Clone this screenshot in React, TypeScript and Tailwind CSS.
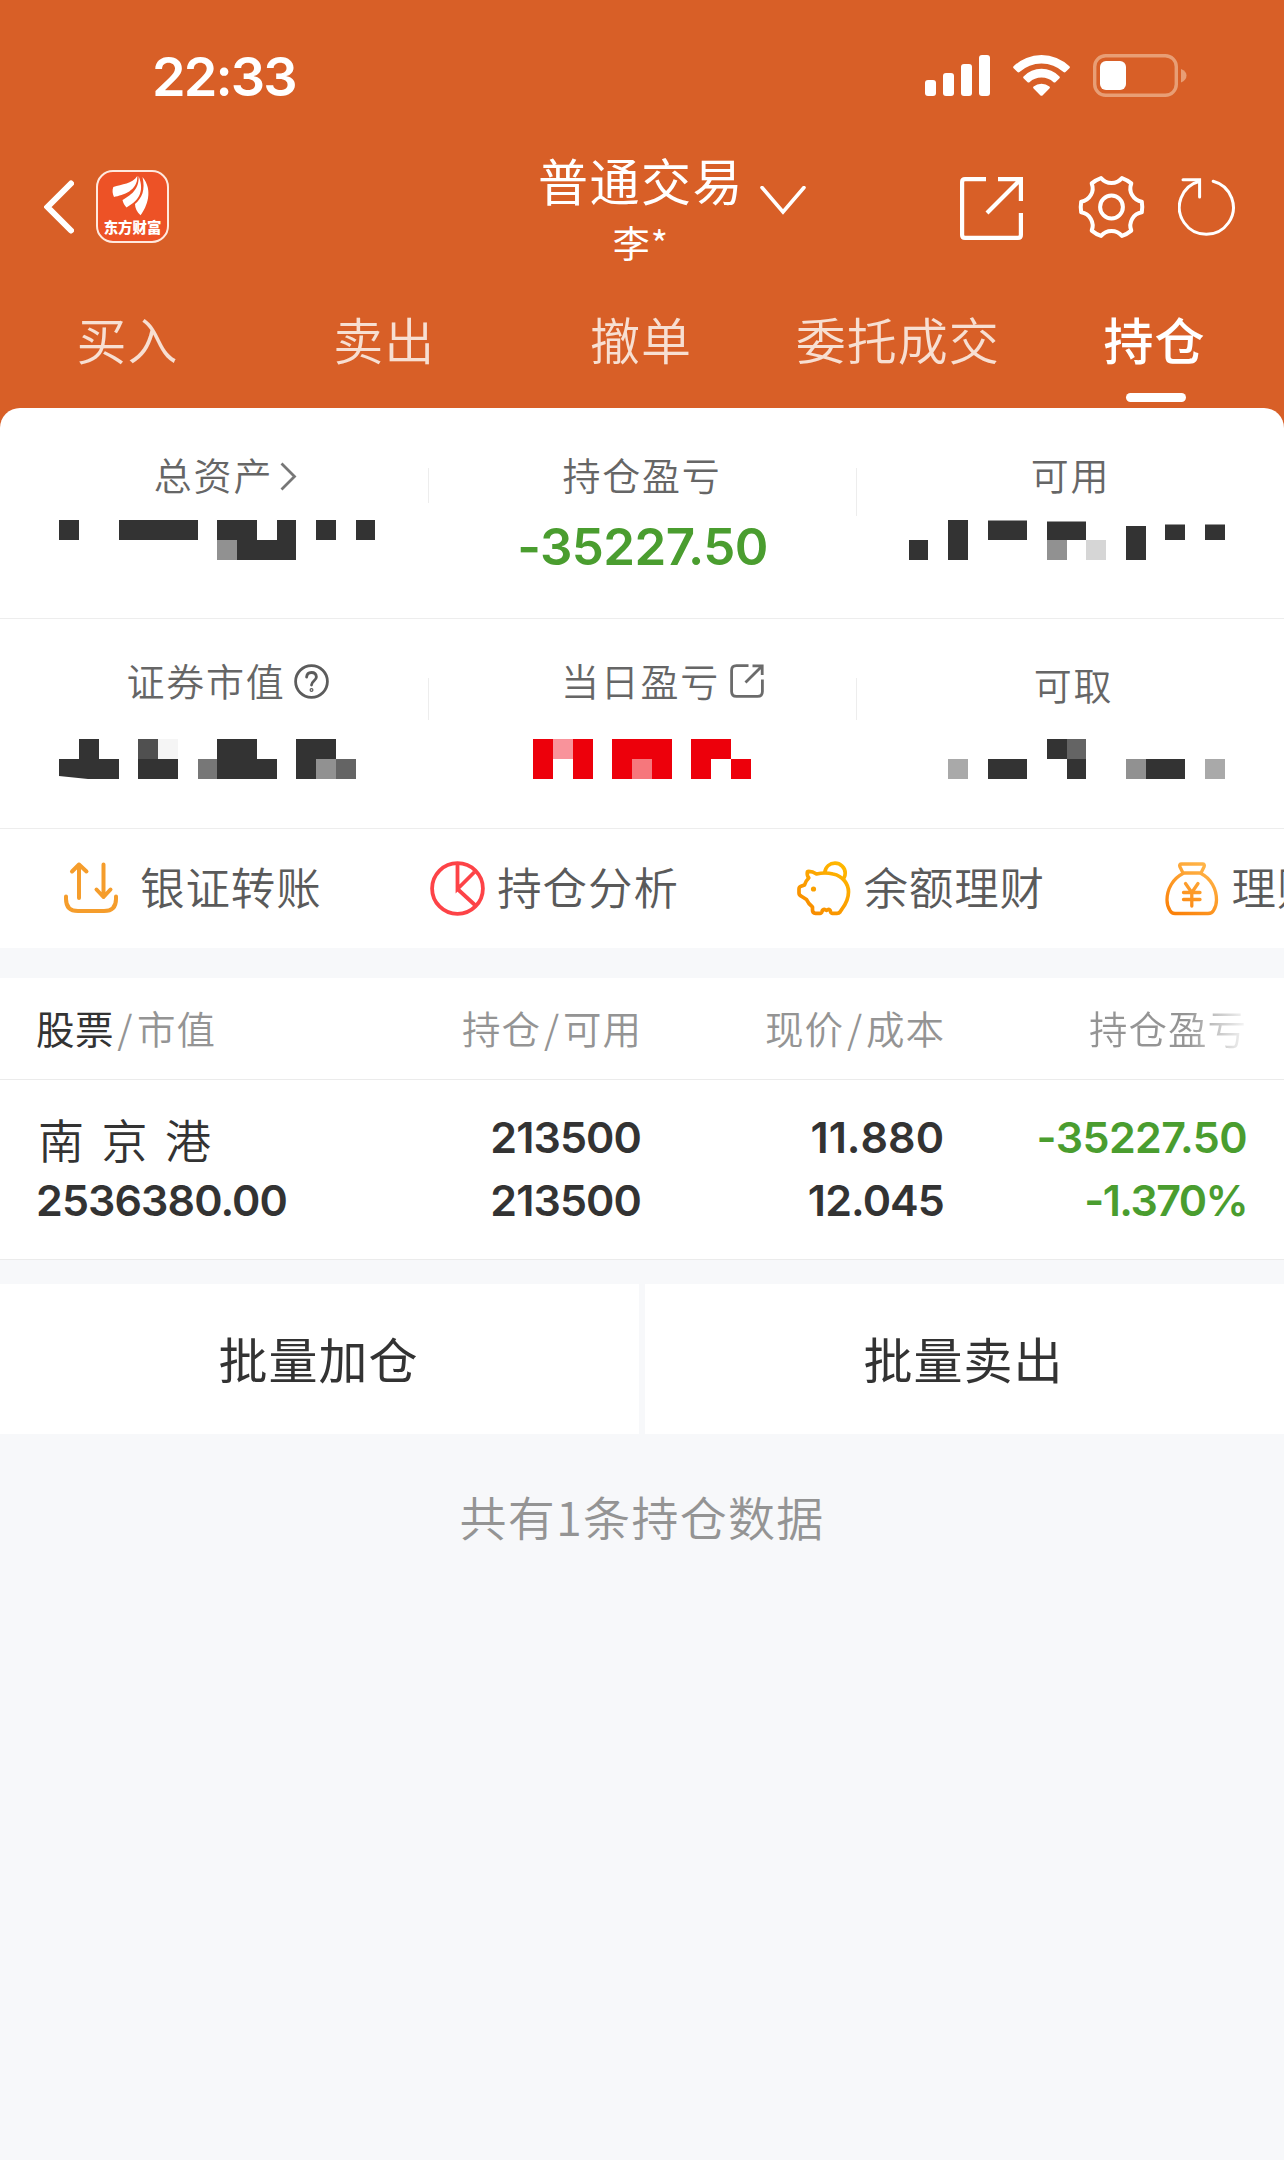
import { ReactNode } from "react";

const tabs = ["买入", "卖出", "撤单", "委托成交", "持仓"];

const DARK = "#333333";
const RED = "#ed000b";
const UNIT = 19.75;

// [first cell, number of cells, row, color, top inset]
type Block = [number, number, number, string, number?];

const totalAssets: Block[] = [
  [3, 1, 0, DARK],
  [6, 4, 0, DARK],
  [11, 2, 0, DARK],
  [14, 1, 0, DARK],
  [16, 1, 0, DARK],
  [18, 1, 0, DARK],
  [11, 1, 1, "#919191"],
  [12, 3, 1, DARK],
];

const available: Block[] = [
  [48, 1, 0, DARK],
  [50, 2, 0, DARK, 0.5],
  [53, 2, 0, DARK, 1.5],
  [57, 1, 0, DARK, 6],
  [59, 1, 0, DARK, 4.5],
  [61, 1, 0, DARK, 4.5],
  [46, 1, 1, DARK],
  [48, 1, 1, DARK],
  [53, 1, 1, "#919191"],
  [55, 1, 1, "#d6d6d6"],
  [57, 1, 1, DARK],
];

const marketValue: Block[] = [
  [4, 1, 0, DARK],
  [7, 1, 0, "#505050"],
  [8, 1, 0, "#f5f5f5"],
  [11, 2, 0, DARK],
  [15, 2, 0, DARK],
  [3, 3, 1, DARK],
  [7, 2, 1, DARK],
  [10, 1, 1, "#777777"],
  [11, 3, 1, DARK],
  [15, 1, 1, DARK],
  [16, 1, 1, "#919191"],
  [17, 1, 1, "#646464"],
];

const dayProfit: Block[] = [
  [27, 1, 0, RED],
  [28, 1, 0, "#f9939b"],
  [29, 1, 0, RED],
  [31, 3, 0, RED],
  [35, 2, 0, RED],
  [27, 1, 1, RED],
  [29, 1, 1, RED],
  [31, 1, 1, RED],
  [32, 1, 1, "#f6777c"],
  [33, 1, 1, RED],
  [35, 1, 1, RED],
  [37, 1, 1, RED],
];

const withdrawable: Block[] = [
  [53, 1, 0, DARK],
  [54, 1, 0, "#646464"],
  [48, 1, 1, "#a9a9a9"],
  [50, 2, 1, DARK],
  [54, 1, 1, DARK],
  [57, 1, 1, "#919191"],
  [58, 2, 1, DARK],
  [61, 1, 1, "#a9a9a9"],
];

// hidden amount, drawn as a mosaic on the page wide cell grid
const Mosaic = ({ column, blocks, notch }: { column: number; blocks: Block[]; notch?: boolean }) => (
  <svg width="428" height="40" viewBox={`${column * 428} 0 428 40`} className="block">
    {blocks.map(([cell, count, row, color, inset = 0]) => {
      const x = Math.round(cell * UNIT);
      return (
        <rect
          key={`${cell}-${row}`}
          x={x}
          y={row * 20 + inset}
          width={Math.round((cell + count) * UNIT) - x}
          height={20 - inset}
          fill={color}
        />
      );
    })}
    {notch && <path d="M59 37L88 40H59Z" fill="#fff" />}
  </svg>
);

const StatusBar = () => (
  <div className="flex h-[152px] items-center pl-[152px]">
    <span className="w-[773px] pt-[2px] font-[Inter,sans-serif] text-[54px] leading-none font-[580] tracking-[-1.9px]">
      22:33
    </span>
    <svg width="65" height="41" viewBox="0 0 65 41" fill="#fff" className="mb-px">
      <rect x="0" y="25" width="11" height="16" rx="3" />
      <rect x="18" y="18" width="11" height="23" rx="3" />
      <rect x="36" y="9" width="11" height="32" rx="3" />
      <rect x="54" y="0" width="11" height="41" rx="3" />
    </svg>
    <svg width="57" height="42" viewBox="0 0 57 42" fill="#fff" className="mb-[2px] ml-[23px]">
      <path d="M.6 12.3A40 40 0 0 1 56.4 12.3Q57.4 13.3 56.4 14.3L52.5 18Q51.5 18.8 50.5 18A33 33 0 0 0 6.5 18Q5.5 18.8 4.5 18L.6 14.3Q-.4 13.3.6 12.3Z" />
      <path d="M10.5 22.4A25 25 0 0 1 46.5 22.4Q47.3 23.3 46.5 24.2L42.4 28.2Q41.5 29 40.5 28.2A18 18 0 0 0 16.5 28.2Q15.5 29 14.6 28.2L10.5 24.2Q9.7 23.3 10.5 22.4Z" />
      <path d="M20.6 32.5A12.5 12.5 0 0 1 36.4 32.5Q37.4 33.5 36.4 34.5L29.5 41.4Q28.5 42.3 27.5 41.4L20.6 34.5Q19.6 33.5 20.6 32.5Z" />
    </svg>
    <svg width="95" height="43" viewBox="0 0 95 43" className="mb-[1px] ml-[23px]">
      <rect x="1.7" y="1.7" width="81.6" height="39.6" rx="11" fill="none" stroke="#e89e75" strokeWidth="3.4" />
      <rect x="7" y="7" width="26" height="29" rx="6" fill="#fff" />
      <path d="M88 15Q93.5 17 93.5 21.5T88 28.5Z" fill="#e89e75" />
    </svg>
  </div>
);

const Logo = () => (
  <div className="ml-[22px] flex h-[73px] w-[73px] flex-col items-center rounded-[17px] border-2 border-[#ffe9de] bg-[#ed5226]">
    <svg width="69" height="46" viewBox="2 2 69 46" fill="#fff" className="shrink-0">
      <path d="M41.3 6C36 14 26 14 17.3 17C16 20 16.5 24 18 27C27 25 42 21 41.3 6Z" />
      <path d="M42.6 6C43.5 20 34 25.5 26.5 30C27 33 28.5 35 30.5 37.5C41 31.5 49.5 23 42.6 6Z" />
      <path d="M46.5 7C49.5 20 46 28 39 34C39 38 41 42 44.5 45.3C51 37 57.5 20 46.5 7Z" />
    </svg>
    <span className="text-[14.4px] leading-[18px] font-black whitespace-nowrap">东方财富</span>
  </div>
);

const NavBar = () => (
  <div className="flex h-[108px] items-center pl-[44px]">
    <svg width="30" height="54" viewBox="0 0 30 54" fill="none" stroke="#fff" strokeWidth="6" strokeLinecap="round" className="mt-px">
      <path d="M27 3.5L3.5 27L27 50.5" />
    </svg>
    <Logo />
    <div className="-my-3 ml-[372px] flex w-[200px] flex-col items-center pt-[2px]">
      <span className="text-[50px] leading-[70px] tracking-[1.5px] whitespace-nowrap">普通交易</span>
      <span className="text-[37px] leading-[56px] tracking-[1px]">李*</span>
    </div>
    <svg width="46" height="29" viewBox="0 0 46 29" fill="none" stroke="#fff" strokeWidth="3.6" className="mt-[-11px] ml-[19px]">
      <path d="M2 1.5L23 26L44 1.5" strokeLinecap="round" />
    </svg>
    <svg width="63" height="63" viewBox="0 0 63 63" fill="none" stroke="#fff" strokeWidth="4.2" className="mt-[5px] ml-[154px]">
      <path d="M26 2.1H5Q2.1 2.1 2.1 5V58Q2.1 60.9 5 60.9H58Q60.9 60.9 60.9 58V36" />
      <path d="M38 2.1H60.9V24M60.5 2.5L27 36" />
    </svg>
    <svg width="67" height="64" viewBox="0 0 67 64" fill="none" stroke="#fff" strokeWidth="4" strokeLinejoin="round" className="mt-[2px] ml-[55px]">
      <path d="M23 3.1A13.5 13.5 0 0 0 44 3.1A31 31 0 0 1 53.3 8.4A13.5 13.5 0 0 0 63.8 26.7A31 31 0 0 1 63.8 37.3A13.5 13.5 0 0 0 53.3 55.6A31 31 0 0 1 44 60.9A13.5 13.5 0 0 0 23 60.9A31 31 0 0 1 13.7 55.6A13.5 13.5 0 0 0 3.2 37.3A31 31 0 0 1 3.2 26.7A13.5 13.5 0 0 0 13.7 8.4A31 31 0 0 1 23 3.1Z" />
      <circle cx="33.5" cy="32" r="11.4" />
    </svg>
    <svg width="58" height="58" viewBox="0 0 58 58" fill="none" stroke="#fff" strokeWidth="3" strokeLinecap="round" className="mt-[2px] ml-[33px]">
      <path d="M35.2 3.2A27 27 0 1 1 21.5 3.2" />
      <path d="M5 1.8H21.6V19" />
    </svg>
  </div>
);

const TabBar = () => (
  <div className="grid h-[148px] grid-cols-5 pt-[48px]">
    {tabs.map((tab) => {
      const active = tab === "持仓";
      return (
        <div key={tab} className="flex flex-col items-center">
          <span
            className={`pr-[2px] text-[50px] leading-[60px] tracking-[1px] whitespace-nowrap ${
              active ? "font-medium text-white" : "font-[350] text-[#f7dfd2]"
            }`}
          >
            {tab}
          </span>
          {active && <div className="mt-[25px] h-[9px] w-[60px] rounded-full bg-white" />}
        </div>
      );
    })}
  </div>
);

const Label = ({ children, className = "" }: { children: ReactNode; className?: string }) => (
  <div
    className={`flex h-[50px] items-center justify-center text-[38px] leading-[50px] font-[350] tracking-[1.8px] text-[#666] ${className}`}
  >
    {children}
  </div>
);

const Stats = () => (
  <div className="rounded-t-[20px] bg-white text-[#333]">
    <div className="flex h-[211px] border-b border-[#ededed] pt-[41px]">
      <div className="w-[428px]">
        <Label className="pl-[23px]">
          总资产
          <svg width="17" height="29" viewBox="0 0 17 29" fill="none" stroke="#777" strokeWidth="2.8" className="mt-[4px] ml-[7px]">
            <path d="M1.5 1.5L14.5 14.5L1.5 27.5" />
          </svg>
        </Label>
        <div className="mt-[21px]">
          <Mosaic column={0} blocks={totalAssets} />
        </div>
      </div>
      <div className="mt-[19px] h-[35px] w-px bg-[#ededed]" />
      <div className="w-[427px]">
        <Label className="pr-px">持仓盈亏</Label>
        <div className="mt-[18px] text-center font-[Inter,sans-serif] text-[51px] leading-[60px] font-[580] tracking-[-0.6px] text-[#4a9d2f]">
          -35227.50
        </div>
      </div>
      <div className="mt-[19px] h-[48px] w-px bg-[#ededed]" />
      <div className="w-[427px]">
        <Label>可用</Label>
        <div className="mt-[21px] -ml-px">
          <Mosaic column={2} blocks={available} />
        </div>
      </div>
    </div>
    <div className="flex h-[210px] border-b border-[#ededed] pt-[36px]">
      <div className="w-[428px]">
        <Label className="pl-[27px]">
          证券市值
          <svg width="35" height="35" viewBox="0 0 35 35" fill="none" stroke="#5c5c5c" strokeWidth="2.8" strokeLinecap="round" className="mt-[2px] ml-[8px]">
            <circle cx="17.5" cy="17.5" r="15.9" />
            <path d="M12.6 13.2Q12.9 8.5 17.5 8.5T22.4 13C22.4 16.5 17.5 17 17.5 21" />
            <circle cx="17.5" cy="26" r="0.6" />
          </svg>
        </Label>
        <div className="mt-[34px]">
          <Mosaic column={0} blocks={marketValue} notch />
        </div>
      </div>
      <div className="mt-[23px] h-[42px] w-px bg-[#ededed]" />
      <div className="w-[427px]">
        <Label className="pl-[40px]">
          当日盈亏
          <svg width="34" height="34" viewBox="0 0 34 34" fill="none" stroke="#6b6b6b" strokeWidth="2.8" className="mt-[2px] ml-[10px]">
            <path d="M18.5 1.6H6.5Q1.6 1.6 1.6 6.5V27.5Q1.6 32.4 6.5 32.4H27.5Q32.4 32.4 32.4 27.5V15.5" />
            <path d="M22.5 1.9H32.2V11M31.8 2.2L15.5 18.5" />
          </svg>
        </Label>
        <div className="mt-[34px] -ml-px">
          <Mosaic column={1} blocks={dayProfit} />
        </div>
      </div>
      <div className="mt-[23px] h-[42px] w-px bg-[#ededed]" />
      <div className="w-[427px]">
        <Label className="mt-[4px] pl-[6px]">可取</Label>
        <div className="mt-[30px] -ml-px">
          <Mosaic column={2} blocks={withdrawable} />
        </div>
      </div>
    </div>
  </div>
);

const TransferIcon = () => (
  <svg width="56" height="55" viewBox="0 0 56 55" fill="none" stroke="#f59d2c" strokeWidth="4" strokeLinecap="round" strokeLinejoin="round">
    <path d="M3 35.5V38Q3 50 15 50H41Q53 50 53 38V35.5" />
    <path d="M16 37V3.5M9 10.5L16 3.5L23.5 10.5" />
    <path d="M40.5 3.5V36M33.5 28.5L40.5 36L47.5 28.5" />
  </svg>
);

const PieIcon = () => (
  <svg width="55" height="55" viewBox="0 0 55 55" fill="none" stroke="#fd4347" strokeWidth="3.8">
    <circle cx="27.5" cy="27.5" r="25.4" />
    <path d="M27.5 2V28L44.5 11M27.5 28L46 45" />
  </svg>
);

const PiggyIcon = () => (
  <svg width="54" height="55" viewBox="0 0 54 55" fill="none" stroke="url(#piggy)" strokeWidth="3.7" strokeLinejoin="round" strokeLinecap="round">
    <defs>
      <linearGradient id="piggy" gradientUnits="userSpaceOnUse" x1="44" y1="2" x2="10" y2="50">
        <stop offset="0" stopColor="#ffb800" />
        <stop offset="1" stopColor="#f88c00" />
      </linearGradient>
    </defs>
    <path d="M10.5 10.5Q15 10 19.5 13Q28 11 36 13C46 15 51.5 23 51.5 31C51.5 38 48 44 45 48L43 51Q42 52.3 40 52.3H35.5Q34 52.3 33.5 50.5Q33 48.3 31.5 48.3L29.5 49.3L27.5 48.3Q25.5 48.3 25 50.5Q24.5 52.3 23 52.3H18.5Q15.5 52.3 15.5 49V46Q11.5 43 9.5 38.5L4 35Q2 34 2 32V28Q2 26 4 25.3L7.5 24Q8.5 20 11.8 17Q9.5 14 10.5 10.5Z" />
    <path d="M27.8 11.5C28.5 5.5 33 2.2 38 2.2C43.5 2.2 48.2 6.5 48.2 12Q48.2 14.3 47.2 16.5" />
    <circle cx="16.5" cy="28" r="2.6" fill="#faa000" stroke="none" />
  </svg>
);

const MoneyBagIcon = () => (
  <svg width="54" height="54" viewBox="0 0 54 54" fill="none" stroke="url(#bag)" strokeWidth="3.3" strokeLinejoin="round" strokeLinecap="round">
    <defs>
      <linearGradient id="bag" gradientUnits="userSpaceOnUse" x1="42" y1="2" x2="10" y2="52">
        <stop offset="0" stopColor="#ffb64a" />
        <stop offset="1" stopColor="#fb8109" />
      </linearGradient>
    </defs>
    <path d="M16.5 2H37.5Q40 2 39.2 4.5L36 11H18L14.8 4.5Q14 2 16.5 2Z" />
    <path d="M18 11.5C8 16.5 2 27 2 38Q2 44 5 48.5Q6.5 51.5 10 51.5H43Q47 51.5 48.5 48.5Q51.5 44 51.5 38C51.5 27 46 16.5 36 11.5" />
    <path d="M20.5 21.5L26.8 30.5L33 21.5M26.8 30.5V44M18.5 30.5H35M18.5 37.5H35" />
  </svg>
);

const actions = [
  { label: "银证转账", icon: <TransferIcon />, gap: "gap-[21px]" },
  { label: "持仓分析", icon: <PieIcon />, gap: "gap-[12px]" },
  { label: "余额理财", icon: <PiggyIcon />, gap: "gap-[12px]" },
  { label: "理财", icon: <MoneyBagIcon />, gap: "gap-[13px]" },
];

const Actions = () => (
  <div className="flex h-[119px] overflow-hidden bg-white pl-[63px]">
    {actions.map((action) => (
      <div key={action.label} className={`flex w-[367.2px] shrink-0 items-center ${action.gap}`}>
        {action.icon}
        <span className="pb-[5px] text-[44.5px] leading-[60px] font-[350] tracking-[0.9px] whitespace-nowrap text-[#5a5a5a]">
          {action.label}
        </span>
      </div>
    ))}
  </div>
);

const Holdings = () => (
  <div className="mt-[30px] bg-white">
    <div className="flex h-[102px] items-center border-b border-[#ebebeb] pb-[4px] pl-[36px] text-[38.5px] leading-[50px] font-[350] tracking-[1px] text-[#949494]">
      <div className="w-[252px]">
        <span className="font-normal tracking-[0.4px] text-[#333]">股票</span>
        <span className="px-[3.5px]">/</span>市值
      </div>
      <div className="w-[354px] text-right">
        持仓<span className="px-[3px]">/</span>可用
      </div>
      <div className="w-[303px] text-right">
        现价<span className="px-[3px]">/</span>成本
      </div>
      <div className="ml-[144px] w-[162px] bg-linear-to-r from-[#949494] from-60% to-white bg-clip-text text-transparent">
        持仓盈亏
      </div>
    </div>
    <div className="flex h-[180px] border-b border-[#ebebeb] pt-[26px] pl-[36px] font-[Inter,sans-serif] text-[43px] leading-[63px] font-[580] tracking-[-0.9px] text-[#333]">
      <div className="w-[252px]">
        <div className="h-[63px] pl-[2px] font-['Noto_Sans_CJK_SC',sans-serif] text-[46px] leading-[65px] font-[350] tracking-[3.6px] whitespace-nowrap">
          南 京 港
        </div>
        <div>2536380.00</div>
      </div>
      <div className="w-[353px] text-right">
        <div>213500</div>
        <div>213500</div>
      </div>
      <div className="w-[303px] text-right">
        <div className="tracking-[0px] [font-kerning:none]">11.880</div>
        <div>12.045</div>
      </div>
      <div className="w-[303px] text-right text-[#4a9d2f]">
        <div className="tracking-[-0.6px]">-35227.50</div>
        <div className="tracking-[-1.6px]">-1.370%</div>
      </div>
    </div>
  </div>
);

const App = () => {
  return (
    <div className="min-h-[2160px] w-[1284px] overflow-hidden bg-[#f7f8fa] font-['Noto_Sans_CJK_SC',sans-serif]">
      <div className="bg-[#d85f27] text-white">
        <StatusBar />
        <NavBar />
        <TabBar />
        <Stats />
      </div>
      <Actions />
      <Holdings />
      <div className="mt-[24px] flex gap-[6px] text-[49px] leading-[147px] tracking-[1px] text-[#333]">
        <button className="h-[150px] flex-1 bg-white pr-[2px] pb-[3px]">批量加仓</button>
        <button className="h-[150px] flex-1 bg-white pr-[2px] pb-[3px]">批量卖出</button>
      </div>
      <p className="mt-[49px] text-center text-[47px] leading-[66px] font-[350] tracking-[1.3px] text-[#949494]">
        共有1条持仓数据
      </p>
    </div>
  );
};

export default App;
